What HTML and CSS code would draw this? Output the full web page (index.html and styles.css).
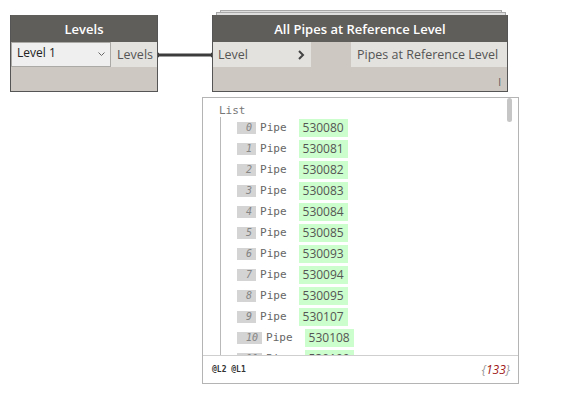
FILE: index.html
```html
<!DOCTYPE html>
<html lang="en">
<head>
    <meta charset="UTF-8">
    <title>All Pipes at Reference Level</title>
    <link rel="stylesheet" href="styles.css">
</head>
<body>
    <div class="canvas">
        <!-- connector between the two nodes -->
        <svg class="wire" width="60" height="10" viewBox="0 0 60 10">
            <path d="M2 5 H58" stroke="#3c3c3c" stroke-width="3"/>
            <path d="M0 1 L4 3 L4 7 L0 9 Z" fill="#3c3c3c"/>
            <path d="M60 1 L56 3 L56 7 L60 9 Z" fill="#3c3c3c"/>
        </svg>

        <!-- Levels node -->
        <div class="node node-levels">
            <div class="node-header">Levels</div>
            <div class="ports">
                <div class="dropdown">
                    <span>Level 1</span>
                    <svg width="7" height="5" viewBox="0 0 7 5"><path d="M0.5 0.5 L3.5 3.5 L6.5 0.5" fill="none" stroke="#666" stroke-width="1"/></svg>
                </div>
                <div class="port port-out">Levels</div>
            </div>
            <div class="node-body"></div>
        </div>

        <!-- All Pipes at Reference Level node -->
        <div class="stack stack-back"></div>
        <div class="stack stack-mid"></div>
        <div class="node node-pipes">
            <div class="node-header">All Pipes at Reference Level</div>
            <div class="ports">
                <div class="port port-in">
                    <span>Level</span>
                    <svg width="7" height="10" viewBox="0 0 7 10"><path d="M1 1 L5 5 L1 9" fill="none" stroke="#444" stroke-width="2"/></svg>
                </div>
                <div class="port-gap"></div>
                <div class="port port-out">Pipes at Reference Level</div>
            </div>
            <div class="node-body"><span class="lacing">I</span></div>
        </div>

        <!-- preview bubble -->
        <div class="preview">
            <div class="preview-scroll">
                <div class="list-title">List</div>
                <div class="list-items" id="list-items"></div>
                <div class="scroll-thumb"></div>
            </div>
            <div class="preview-footer">
                <span class="levels">@L2 @L1</span>
                <span class="count">{<em>133</em>}</span>
            </div>
        </div>
    </div>

<script>
    const values = ['530080', '530081', '530082', '530083', '530084', '530085',
                    '530093', '530094', '530095', '530107', '530108', '530109'];

    const list = document.getElementById('list-items');
    values.forEach((value, i) => {
        const row = document.createElement('div');
        row.className = 'list-row';
        row.innerHTML = '<span class="index">' + i + '</span>' +
                        '<span class="type">Pipe</span>' +
                        '<span class="value">' + value + '</span>';
        list.appendChild(row);
    });
</script>
</body>
</html>
```

FILE: styles.css
```css
/* Base */
body {
    margin: 0;
    background-color: #ffffff;
    font-family: 'Open Sans', sans-serif;
}
.canvas {
    position: relative;
    width: 570px;
    height: 396px;
    overflow: hidden;
}

/* Nodes */
.node {
    position: absolute;
    top: 15px;
    height: 77px;
    border: 1px solid #555555;
    border-top: none;
    box-sizing: border-box;
    display: flex;
    flex-direction: column;
    background-color: #cdc9c2;
}
.node-levels {
    left: 10px;
    width: 148px;
}
.node-pipes {
    left: 212px;
    width: 296px;
}
.node-header {
    height: 27px;
    background-color: #5f5e5b;
    color: #ffffff;
    font-size: 13px;
    font-weight: 600;
    display: flex;
    align-items: center;
    justify-content: center;
    flex-shrink: 0;
}
.ports {
    height: 25px;
    display: flex;
    flex-shrink: 0;
}
.node-body {
    flex: 1;
    position: relative;
}
.dropdown {
    width: 100px;
    box-sizing: border-box;
    border: 1px solid #acaaa6;
    background-color: #efefef;
    display: flex;
    align-items: center;
    justify-content: space-between;
    padding: 0 5px 0 5px;
    font-size: 12px;
    color: #222222;
}
.dropdown span {
    margin-top: -4px;
}
.port {
    background-color: #e3e2de;
    color: #555555;
    font-size: 12.5px;
    display: flex;
    align-items: center;
}
.node-levels .port-out {
    flex: 1;
    justify-content: flex-end;
    padding-right: 4px;
}
.port-in {
    width: 98px;
    box-sizing: border-box;
    padding: 0 6px 0 5px;
    justify-content: space-between;
}
.port-gap {
    width: 40px;
}
.node-pipes .port-out {
    flex: 1;
    padding-left: 6px;
}
.lacing {
    position: absolute;
    right: 6px;
    bottom: 2px;
    font-size: 10px;
    color: #555555;
}

/* Stacked node outline behind the pipes node */
.stack {
    position: absolute;
    height: 6px;
    border: 1px solid #a9a9a9;
    border-bottom: none;
    background-color: #dedede;
}
.stack-back {
    left: 220px;
    top: 10px;
    width: 280px;
}
.stack-mid {
    left: 216px;
    top: 12px;
    width: 288px;
}

.wire {
    position: absolute;
    left: 155px;
    top: 50px;
}

/* Preview bubble */
.preview {
    position: absolute;
    left: 202px;
    top: 97px;
    width: 317px;
    height: 287px;
    border: 1px solid #b4b4b4;
    box-sizing: border-box;
    background-color: #ffffff;
    display: flex;
    flex-direction: column;
}
.preview-scroll {
    flex: 1;
    overflow: hidden;
    position: relative;
    padding: 6px 0 0 16px;
}
.list-title {
    font-family: 'DejaVu Sans Mono', monospace;
    font-size: 11px;
    color: #777777;
    line-height: 14px;
}
.list-items {
    margin: -1px 0 0 1px;
    border-left: 1px solid #b9b9b9;
    padding: 0 0 0 16px;
}
.list-row {
    height: 21px;
    display: flex;
    align-items: center;
}
.index {
    height: 12px;
    padding: 0 4px 0 9px;
    background-color: #d4d4d4;
    color: #858585;
    font-family: 'DejaVu Sans Mono', monospace;
    font-style: italic;
    font-size: 10px;
    line-height: 12px;
}
.type {
    font-family: 'DejaVu Sans Mono', monospace;
    font-size: 11px;
    color: #666666;
    margin: 0 12px 0 4px;
}
.value {
    background-color: #ccfdcc;
    color: #555555;
    font-size: 12px;
    padding: 0 4px;
    height: 18px;
    line-height: 18px;
}
.scroll-thumb {
    position: absolute;
    right: 6px;
    top: 0;
    width: 5px;
    height: 24px;
    border-radius: 3px;
    background-color: #c6c6c6;
}
.preview-footer {
    height: 27px;
    border-top: 1px solid #cfcfcf;
    display: flex;
    align-items: center;
    justify-content: space-between;
    padding: 0 8px 0 9px;
    flex-shrink: 0;
}
.levels {
    font-family: 'DejaVu Sans Mono', monospace;
    font-size: 8px;
    font-weight: bold;
    color: #333333;
}
.count {
    font-size: 12px;
    color: #999999;
    font-style: italic;
}
.count em {
    color: #a01818;
}
```
